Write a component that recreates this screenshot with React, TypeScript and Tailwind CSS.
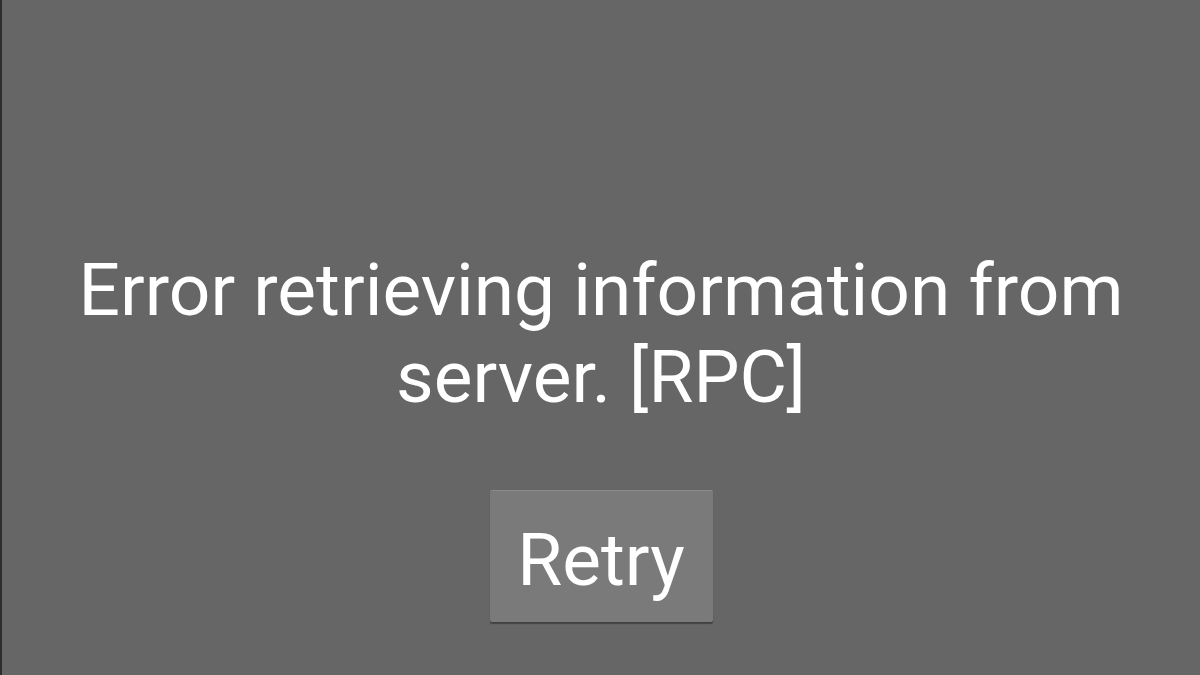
export default function App() {
  return (
    <div className="flex h-[675px] w-[1200px] overflow-hidden bg-[#666666] font-['Roboto',sans-serif]">
      <div className="w-[2px] shrink-0 bg-[#2e2e2e]" />
      <main className="flex flex-1 flex-col items-center pt-[247px]">
        <p className="text-center text-[73px] leading-[87px] text-white">
          Error retrieving information from
          <br />
          server. [RPC]
        </p>
        <button
          type="button"
          className="mt-[69px] flex h-[132px] w-[223px] items-center justify-center rounded-[2px] border-t border-[#8a8a8a] bg-[#7a7a7a] pt-[8px] text-[73px] text-white shadow-[0_2px_1px_rgba(0,0,0,0.35)]"
        >
          Retry
        </button>
      </main>
    </div>
  );
}
